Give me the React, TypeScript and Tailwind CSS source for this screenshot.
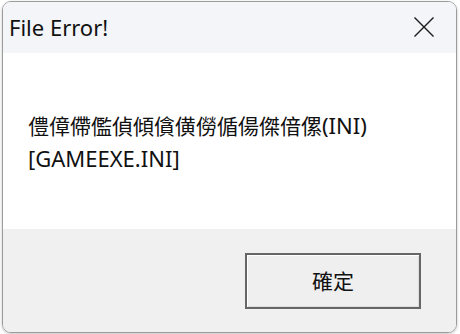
export default function App() {
  return (
    <div className="w-[460px] h-[334px] bg-white overflow-hidden">
      <div className="ml-[2px] mt-[1px] w-[455px] h-[332px] flex flex-col border border-[#9c9c9c] rounded-[9px] overflow-hidden shadow-[0_1px_3px_rgba(0,0,0,0.25)]">
        {/* title bar */}
        <div className="h-[51px] shrink-0 flex items-center justify-between bg-[#f3f5f9] pl-[6px] pr-[21px]">
          <span className="text-[22px] text-[#111] font-['Noto_Sans','Noto_Sans_CJK_TC',sans-serif] leading-none -mt-[1px]">
            File Error!
          </span>
          <svg width="22" height="22" viewBox="0 0 22 22" className="-mt-[2px]">
            <path d="M1.5 1.5 L20.5 20.5 M20.5 1.5 L1.5 20.5" stroke="#1a1a1a" strokeWidth="1.4" fill="none" />
          </svg>
        </div>

        {/* message */}
        <div className="h-[176px] shrink-0 bg-white pl-[25px] pt-[56px]">
          <p className="text-[22px] leading-[33px] text-[#111] font-['Noto_Sans','Noto_Sans_CJK_TC',sans-serif]">
            <span className="text-[21px] font-['Noto_Sans_CJK_TC',sans-serif]">僼傽僀儖偵傾僋僙僗偱偒傑偣傫</span>
            (INI)
            <br />
            [GAMEEXE.INI]
          </p>
        </div>

        {/* footer */}
        <div className="flex-1 bg-[#f0f0f0] flex justify-end items-start pt-[24px] pr-[35px]">
          <button className="w-[176px] h-[56px] border-2 border-[#666] bg-[#efefef] shadow-[inset_1px_1px_0_#fff,inset_-1px_-1px_0_#dcdcdc] flex items-center justify-center text-[21px] text-[#111] font-['Noto_Sans_CJK_TC','Noto_Sans_CJK_SC',sans-serif]">
            確定
          </button>
        </div>
      </div>
    </div>
  );
}
